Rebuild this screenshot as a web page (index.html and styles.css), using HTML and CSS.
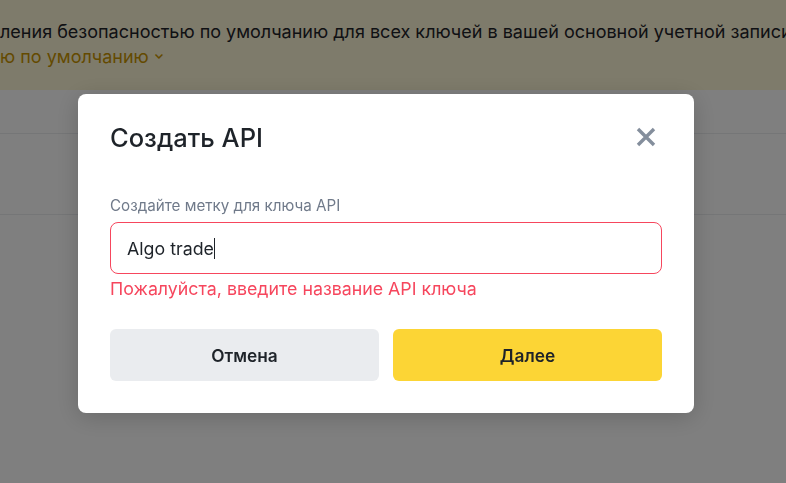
FILE: index.html
```html
<!DOCTYPE html>
<html lang="ru">
<head>
    <meta charset="UTF-8">
    <meta name="viewport" content="width=device-width, initial-scale=1.0">
    <title>API Management</title>
    <link rel="stylesheet" href="styles.css">
</head>
<body>

    <div class="notice">
        <p class="notice-text">ления безопасностью по умолчанию для всех ключей в вашей основной учетной записи</p>
        <a class="notice-link" href="#">ю по умолчанию <span class="chev">&#8964;</span></a>
    </div>

    <div class="tabs"></div>
    <div class="toolbar"></div>

    <!-- modal -->
    <div class="overlay">
        <div class="modal">
            <div class="modal-head">
                <h2>Создать API</h2>
                <svg class="close" width="20" height="20" viewBox="0 0 20 20">
                    <path d="M2 2 L18 18 M18 2 L2 18" stroke="#848e9c" stroke-width="3.4" stroke-linecap="butt"/>
                </svg>
            </div>

            <label class="field-label">Создайте метку для ключа API</label>
            <div class="field-input">Algo trade<span class="caret"></span></div>
            <div class="field-error">Пожалуйста, введите название API ключа</div>

            <div class="actions">
                <button class="btn btn-cancel">Отмена</button>
                <button class="btn btn-next">Далее</button>
            </div>
        </div>
    </div>

</body>
</html>
```

FILE: styles.css
```css
body {
    margin: 0;
    font-family: 'Inter', 'Liberation Sans', sans-serif;
    background-color: #fff;
    color: #1e2329;
    overflow: hidden;
    height: 483px;
}

.notice {
    background-color: #fcf6d6;
    height: 90px;
    padding-top: 19px;
    box-sizing: border-box;
    white-space: nowrap;
    overflow: hidden;
}

.notice-text {
    margin: 0;
    font-size: 18px;
    line-height: 25px;
    color: #1e2329;
}

.notice-link {
    display: block;
    font-size: 18px;
    line-height: 25px;
    color: #c99400;
    text-decoration: none;
}

.chev {
    font-size: 13px;
    font-weight: 700;
    position: relative;
    top: -4px;
}

.tabs {
    height: 43px;
    border-bottom: 1px solid #eaecef;
}

.toolbar {
    height: 80px;
    border-bottom: 1px solid #eaecef;
}

/* dark layer with the dialog */
.overlay {
    position: fixed;
    top: 0;
    left: 0;
    right: 0;
    bottom: 0;
    background-color: rgba(0, 0, 0, 0.5);
    display: flex;
    align-items: flex-start;
    padding-top: 94px;
    padding-left: 78px;
}

.modal {
    width: 616px;
    box-sizing: border-box;
    background-color: #fff;
    border-radius: 8px;
    padding: 25px 32px 32px 32px;
    box-shadow: 0 4px 24px rgba(0, 0, 0, 0.18);
}

.modal-head {
    display: flex;
    justify-content: space-between;
    align-items: center;
    height: 36px;
    padding-right: 6px;
}

.modal-head h2 {
    margin: 0;
    font-size: 25.5px;
    font-weight: 500;
    color: #1e2329;
}

.field-label {
    display: block;
    margin-top: 41px;
    font-size: 15.2px;
    line-height: 20px;
    color: #707a8a;
}

.field-input {
    margin-top: 6px;
    height: 52px;
    box-sizing: border-box;
    border: 1px solid #f6465d;
    border-radius: 8px;
    padding: 0 16px;
    display: flex;
    align-items: center;
    font-size: 17.8px;
    color: #1e2329;
}

.caret {
    display: inline-block;
    width: 1px;
    height: 21px;
    background-color: #1e2329;
}

.field-error {
    margin-top: 4px;
    font-size: 17.8px;
    line-height: 22px;
    color: #f6465d;
}

.actions {
    display: flex;
    gap: 14px;
    margin-top: 29px;
}

.btn {
    flex: 1;
    height: 52px;
    border: none;
    border-radius: 6px;
    font-family: inherit;
    font-size: 17.3px;
    font-weight: 600;
    color: #1e2329;
    cursor: pointer;
}

.btn-cancel {
    background-color: #eaecef;
}

.btn-next {
    background-color: #fcd535;
}
```
